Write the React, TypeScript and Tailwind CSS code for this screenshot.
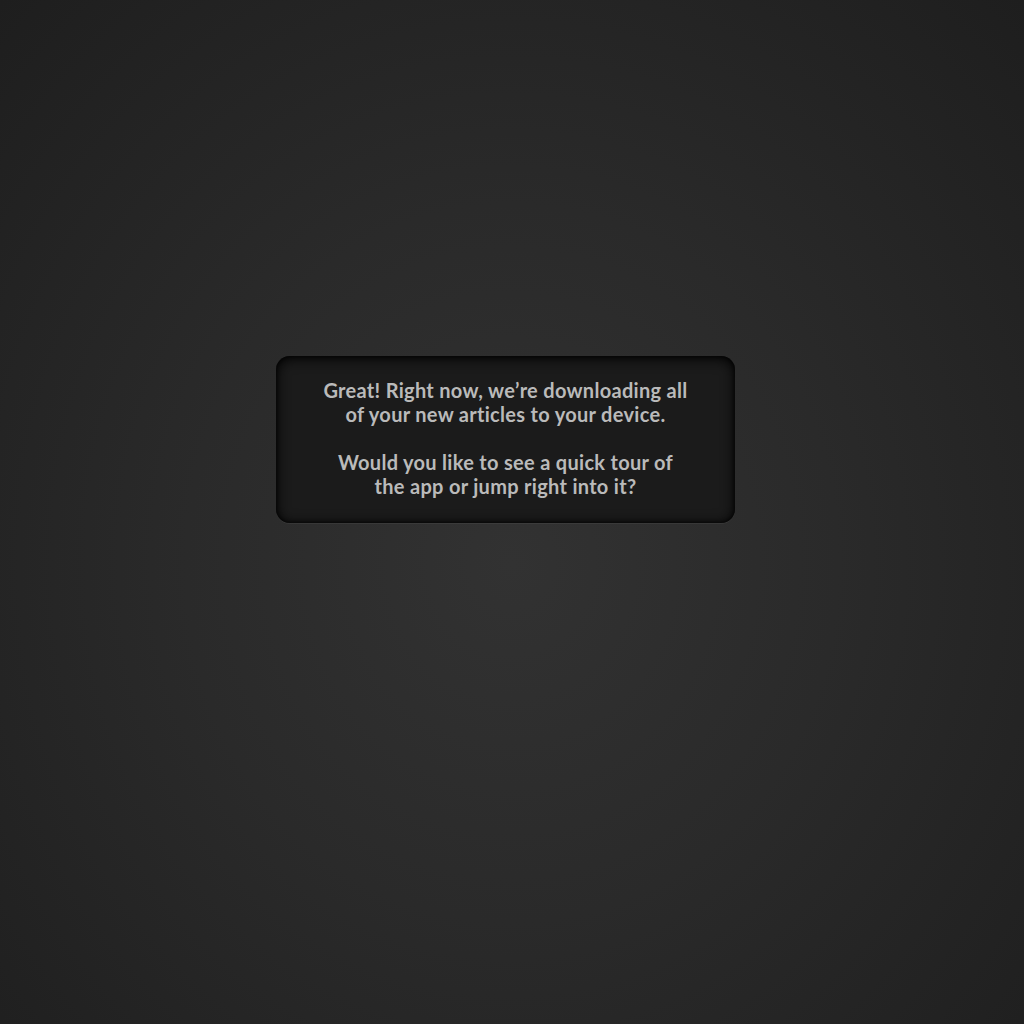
import React from "react";

export default function App() {
  return (
    <div className="relative w-full h-[1024px] flex justify-center pt-[356px] pr-[13px] bg-[radial-gradient(ellipse_at_50%_55%,#323232_0%,#2a2a2a_45%,#1e1e1e_100%)]">
      <div className="w-[459px] h-[167px] rounded-[14px] bg-[#1b1b1b] shadow-[inset_0_2px_14px_rgba(0,0,0,1),inset_0_0_4px_rgba(0,0,0,0.9),0_1px_0_rgba(255,255,255,0.05)] flex flex-col items-center pt-[22px] text-center text-[20px] leading-[24px] tracking-[0.3px] font-bold text-[#bababa] [font-family:Lato,'Noto_Sans',sans-serif]">
        <p>Great! Right now, we’re downloading all<br />of your new articles to your device.</p>
        <p className="mt-[24px]">Would you like to see a quick tour of<br />the app or jump right into it?</p>
      </div>
    </div>
  );
}
